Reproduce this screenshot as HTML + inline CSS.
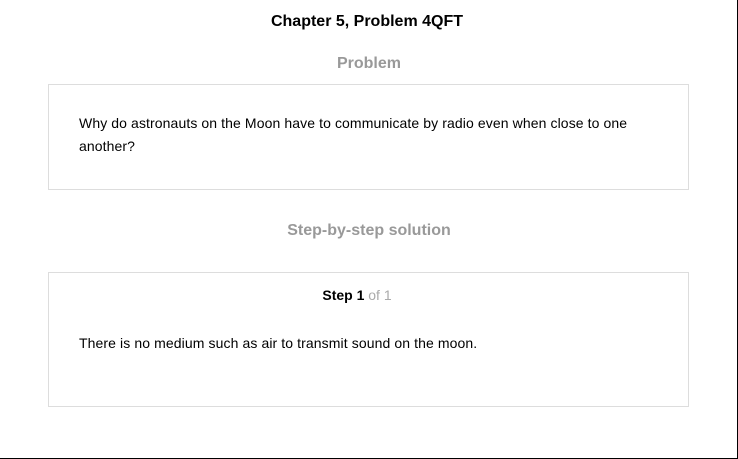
<!DOCTYPE html>
<html><head><style>
body{margin:0;width:738px;height:459px;background:#fff;font-family:"Liberation Sans",Arial,sans-serif;position:relative;overflow:hidden}
.frame{position:absolute;left:0;top:0;width:737px;height:458px;border-right:1px solid #000;border-bottom:1px solid #000;box-sizing:content-box}
.t{position:absolute;left:0;width:738px;text-align:center;font-weight:bold}
.box{position:absolute;left:48px;width:639px;border:1px solid #ddd}
.p{position:absolute;left:79px;font-size:14px;line-height:23px;color:#000;letter-spacing:0.1px}
</style></head><body>
<div class="frame"></div>
<div class="t" style="top:13px;font-size:16px;color:#000;left:-2px">Chapter 5, Problem 4QFT</div>
<div class="t" style="top:55px;font-size:16px;color:#999">Problem</div>
<div class="box" style="top:84px;height:104px"></div>
<div class="p" style="top:112px;width:580px">Why do astronauts on the Moon have to communicate by radio even when close to one another?</div>
<div class="t" style="top:222px;font-size:16px;color:#999">Step-by-step solution</div>
<div class="box" style="top:272px;height:133px"></div>
<div class="t" style="top:287px;font-size:14px;color:#000;left:-12px">Step 1 <span style="font-weight:normal;color:#aaa">of 1</span></div>
<div class="p" style="top:332px">There is no medium such as air to transmit sound on the moon.</div>
</body></html>
